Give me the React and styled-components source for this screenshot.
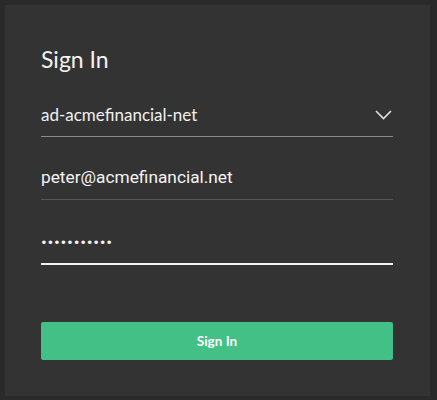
import styled, { createGlobalStyle } from "styled-components";

const GlobalStyle = createGlobalStyle`
	html, body {
		margin: 0;
		padding: 0;
		background: #2a2a2a;
	}
	* {
		box-sizing: border-box;
	}
`;

const Frame = styled.div`
	width: 437px;
	height: 400px;
	padding: 5px 7px 4px 5px;
	background: #2a2a2a;
`;

const Panel = styled.div`
	height: 100%;
	background: #333333;
	padding: 40px 37px 0 36px;
	display: flex;
	flex-direction: column;
`;

const Title = styled.h1`
	margin: 0;
	font-family: "Lato", "Open Sans", sans-serif;
	font-size: 23px;
	font-weight: 400;
	color: #f2f2f2;
	line-height: 28px;
`;

const Field = styled.div`
	display: flex;
	align-items: center;
	justify-content: space-between;
	height: ${(props) => props.height || 40}px;
	margin-top: ${(props) => props.top || 0}px;
	border-bottom: ${(props) => (props.active ? "2px solid #f0f0f0" : props.light ? "1px solid #8a8a8a" : "1px solid #555555")};
	padding-bottom: 2px;
`;

const SelectText = styled.span`
	font-family: "Lato", "Open Sans", sans-serif;
	font-size: 17px;
	color: #f0f0f0;
`;

const InputText = styled.span`
	font-family: "Roboto", sans-serif;
	font-size: 17.3px;
	color: #f4f4f4;
	letter-spacing: ${(props) => props.spacing || 0}px;
`;

const Chevron = styled.svg`
	width: 17px;
	height: 10px;
	margin-right: 1px;
`;

const Button = styled.button`
	margin-top: 57px;
	height: 38px;
	width: 100%;
	border: none;
	border-radius: 2px;
	background: #43c086;
	color: #ffffff;
	font-family: "Lato", "Open Sans", sans-serif;
	font-weight: 700;
	font-size: 13.5px;
	cursor: pointer;
`;

const App = () => {
	return (
		<>
			<GlobalStyle />
			<Frame>
				<Panel>
					<Title>Sign In</Title>
					<Field top={22} height={42} light>
						<SelectText>ad-acmefinancial-net</SelectText>
						<Chevron viewBox="0 0 17 10">
							<path d="M1 1 L8.5 8.5 L16 1" fill="none" stroke="#e0e0e0" strokeWidth="1.6" />
						</Chevron>
					</Field>
					<Field top={20} height={43}>
						<InputText>peter@acmefinancial.net</InputText>
					</Field>
					<Field top={22} height={43} active>
						<InputText spacing={0.7}>•••••••••••</InputText>
					</Field>
					<Button>Sign In</Button>
				</Panel>
			</Frame>
		</>
	);
};

export default App;
